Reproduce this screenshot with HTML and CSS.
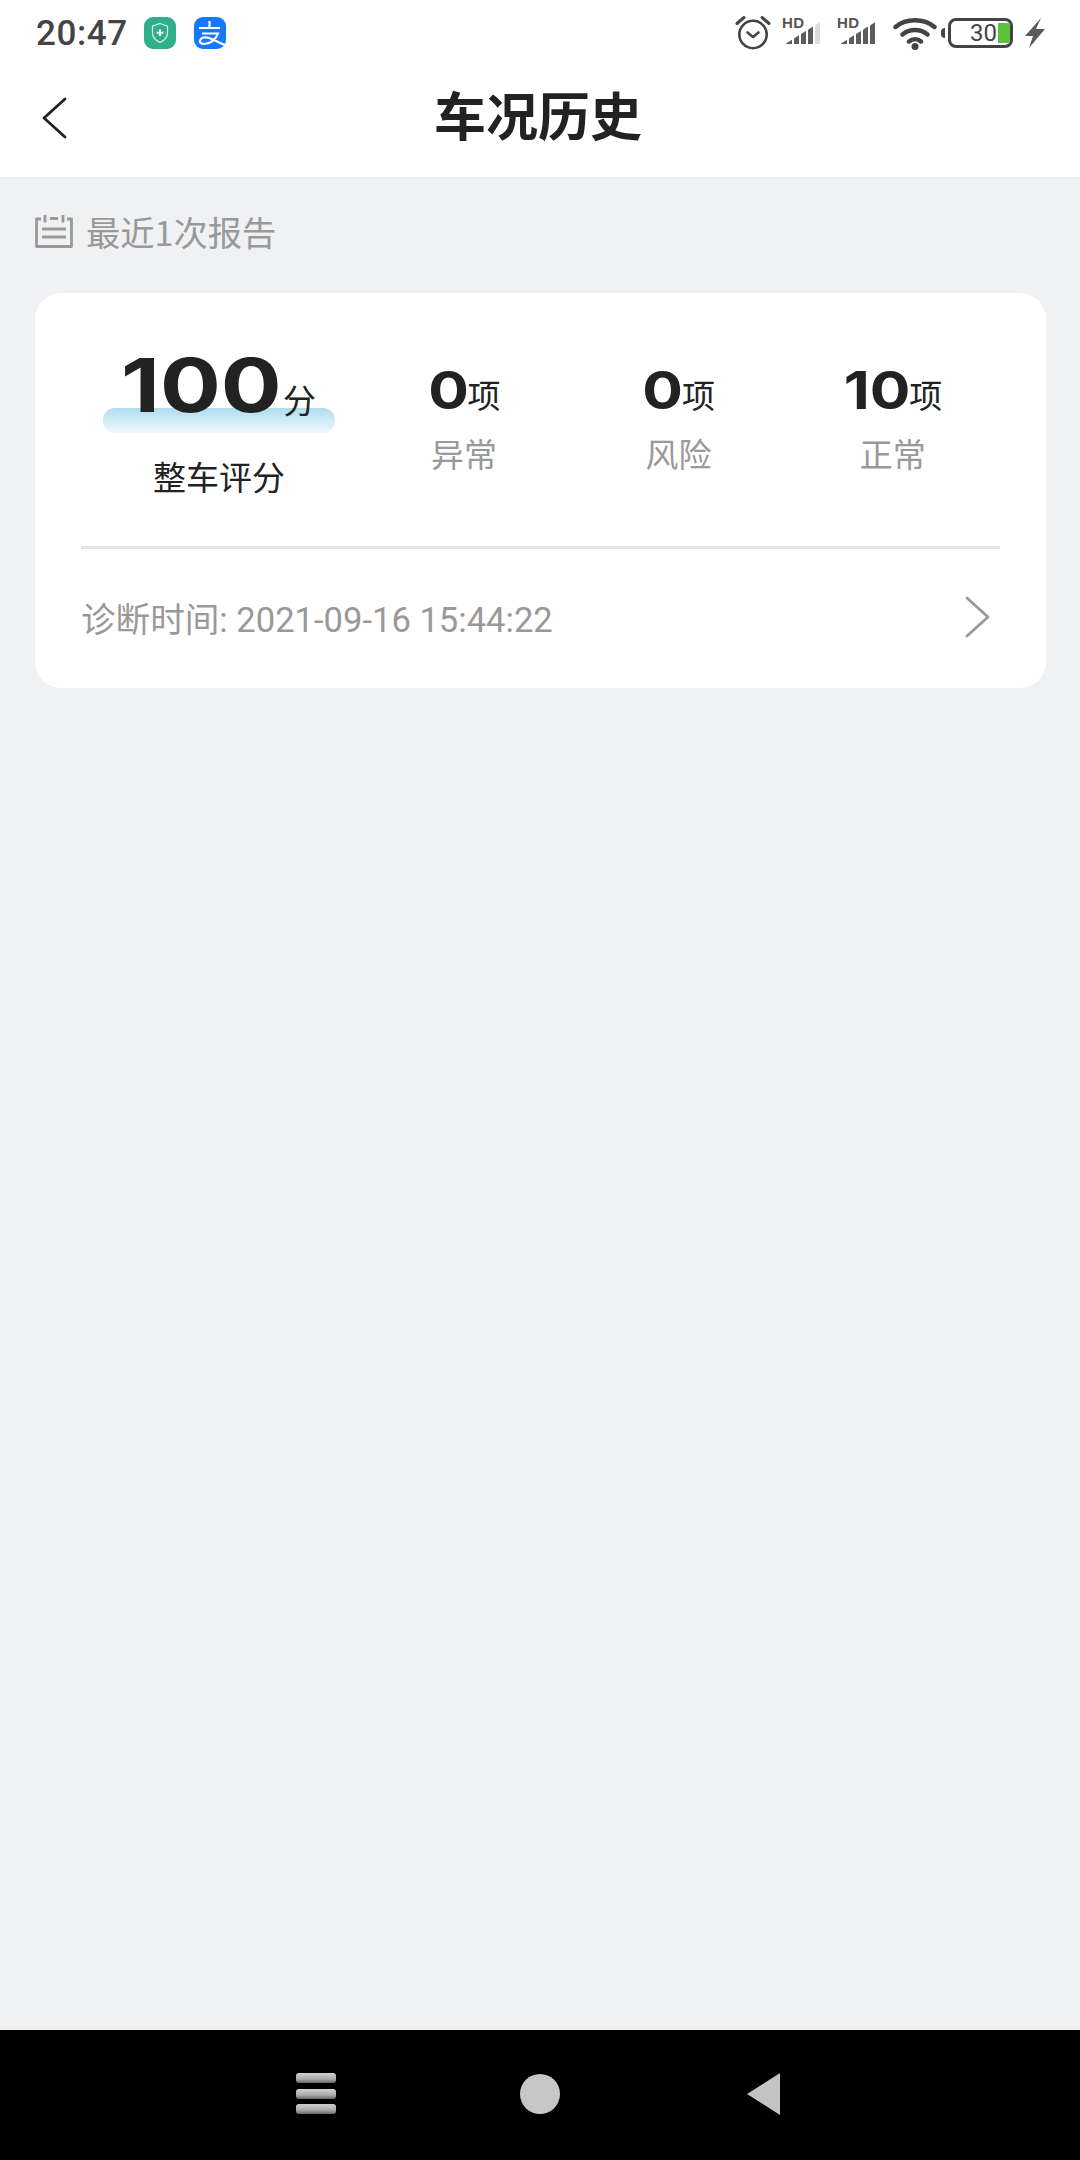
FILE: index.html
```html
<!DOCTYPE html>
<html lang="zh">
<head>
<meta charset="utf-8">
<title>车况历史</title>
<link rel="stylesheet" href="styles.css">
</head>
<body>
<div class="phone">
  <div class="statusbar">
    <div class="status-left">
      <span class="clock">20:47</span>
      <svg class="app-icon" viewBox="0 0 32 32"><rect width="32" height="32" rx="9" fill="#2fae8c"/><path d="M16 6.500l7.500 2.600v6.400c0 4.700-3 8-7.500 10-4.500-2-7.500-5.300-7.500-10V9.100z" fill="none" stroke="#d8f3ea" stroke-width="1.200"/><path d="M16 12.500v6.500M12.700 15.700h6.600" stroke="#fff" stroke-width="2"/></svg>
      <svg class="app-icon alipay" viewBox="0 0 32 32"><rect width="32" height="32" rx="9" fill="#1677ff"/><path d="M15.500 4v8M5 11h21M8 16.500h16c-2 6-8 10.500-14 10.500-3.500 0-4.500-2-4-3.500 1-3 5-4 9-2.500 6 2 10 5 17 7.500" fill="none" stroke="#fff" stroke-width="2.200"/></svg>
    </div>
    <div class="status-right">
      <svg class="alarm" viewBox="0 0 36 36"><circle cx="18" cy="19.500" r="13.700" fill="none" stroke="#444" stroke-width="2.600"/><path d="M12.500 17.500l5.500 4.500 5.500-4.500" fill="none" stroke="#444" stroke-width="2.600" stroke-linecap="round" stroke-linejoin="round"/><path d="M2 8.500L9 2.500M34 8.500L27 2.500" stroke="#444" stroke-width="3" stroke-linecap="round"/></svg>
      <div class="signal">
        <span class="hd">HD</span>
        <svg class="bars" viewBox="0 0 34 22"><path d="M0 22v-.600L6 17.700V22zM8 22v-5.600l5-3.100V22zM15 22V12l5-3v13zM22 22V7.700l5-3.100V22z" fill="#5c5c5c"/><path d="M29 22V3.400l5-3.100V22z" fill="#dcdcdc"/></svg>
      </div>
      <div class="signal second">
        <span class="hd">HD</span>
        <svg class="bars" viewBox="0 0 34 22"><path d="M0 22v-.600L6 17.700V22zM8 22v-5.600l5-3.100V22zM15 22V12l5-3v13zM22 22V7.700l5-3.100V22zM29 22V3.400l5-3.100V22z" fill="#5c5c5c"/></svg>
      </div>
      <svg class="wifi" viewBox="0 0 44 34"><path d="M2.500 11C13 2 31 2 41.500 11M9.500 18.500c7-6 18-6 25 0M16 25.500c3.500-3 8.500-3 12 0" fill="none" stroke="#444" stroke-width="4.400" stroke-linecap="round"/><circle cx="22" cy="30.500" r="3.500" fill="#444"/></svg>
      <div class="battery">
        <span class="bat-nub"></span>
        <div class="bat-body"><span class="bat-num">30</span><span class="bat-fill"></span></div>
      </div>
      <svg class="bolt" viewBox="0 0 20 30"><path d="M16 0L0 18h8L4 30 20 11h-9z" fill="#5a5a5a"/></svg>
    </div>
  </div>
  <header class="navbar">
    <svg class="back" viewBox="0 0 26 42"><path d="M24 2L3 21l21 19" fill="none" stroke="#222" stroke-width="2.800" stroke-linecap="round" stroke-linejoin="round"/></svg>
    <h1 class="title">车况历史</h1>
    <span></span>
  </header>
  <main class="content">
    <div class="section-label">
      <svg class="cal" viewBox="0 0 38 33"><path d="M6 4H1.500v27.500h35V4H32M15 3.500h8" fill="none" stroke="#999" stroke-width="2.800" stroke-linejoin="round"/><path d="M10 0v7.500M28 0v7.500M7 14h24M7 22h24" fill="none" stroke="#999" stroke-width="2.800"/></svg>
      <span>最近1次报告</span>
    </div>
    <section class="card">
      <div class="stats">
        <div class="score">
          <div class="score-value">
            <span class="score-band"></span>
            <span class="digits big">100</span><span class="unit score-unit">分</span>
          </div>
          <div class="score-label">整车评分</div>
        </div>
        <div class="stat"><div class="stat-value"><span class="digits one">0</span><span class="unit">项</span></div><div class="stat-label">异常</div></div>
        <div class="stat"><div class="stat-value"><span class="digits one">0</span><span class="unit">项</span></div><div class="stat-label">风险</div></div>
        <div class="stat"><div class="stat-value"><span class="digits two">10</span><span class="unit">项</span></div><div class="stat-label">正常</div></div>
      </div>
      <div class="diag">
        <span>诊断时间: 2021-09-16 15:44:22</span>
        <svg class="chev" viewBox="0 0 26 42"><path d="M2 2l21 19L2 40" fill="none" stroke="#999" stroke-width="2.800" stroke-linecap="round" stroke-linejoin="round"/></svg>
      </div>
    </section>
  </main>
  <nav class="sysnav">
    <svg class="sys-menu" viewBox="0 0 40 42"><defs><linearGradient id="barg" x1="0" y1="0" x2="0" y2="1"><stop offset="0" stop-color="#d0d0d0"/><stop offset=".6" stop-color="#aaa"/><stop offset="1" stop-color="#666"/></linearGradient></defs><rect y="0" width="40" height="10" rx="3" fill="url(#barg)"/><rect y="16" width="40" height="10" rx="3" fill="url(#barg)"/><rect y="31" width="40" height="10" rx="3" fill="url(#barg)"/></svg>
    <span class="sys-home"></span>
    <svg class="sys-back" viewBox="0 0 34 42"><path d="M33 0v42L0 21z" fill="#c4c4c4"/></svg>
  </nav>
</div>
</body>
</html>
```
FILE: styles.css
```css
* { box-sizing: border-box; margin: 0; padding: 0; }
html, body { width: 1080px; height: 2160px; overflow: hidden; }
body { font-family: "Roboto", "Noto Sans CJK SC", sans-serif; background: #eff1f3; }
.phone { width: 1080px; height: 2160px; display: flex; flex-direction: column; }

.statusbar { height: 64px; flex: none; background: #fff; display: flex; justify-content: space-between; align-items: center; padding: 2px 34px 0 36px; }
.status-left { display: flex; align-items: center; }
.clock { font-family: "Roboto", sans-serif; font-weight: 500; font-size: 35px; letter-spacing: .6px; color: #444; width: 108px; }
.app-icon { width: 32px; height: 32px; display: block; }
.alipay { margin-left: 18px; }
.status-right { display: flex; align-items: center; }
.alarm { width: 36px; height: 36px; display: block; }
.signal { position: relative; width: 38px; height: 26px; margin-left: 11px; margin-top: -4px; }
.signal.second { margin-left: 17px; }
.hd { position: absolute; left: 0; top: -1px; font: 700 15px/12px "Liberation Sans", sans-serif; color: #555; letter-spacing: .3px; }
.bars { position: absolute; left: 4px; top: 4px; width: 34px; height: 22px; display: block; }
.wifi { width: 44px; height: 34px; display: block; margin-left: 18px; }
.battery { display: flex; align-items: center; margin-left: 4px; gap: 3px; }
.bat-nub { width: 4px; height: 10px; background: #444; border-radius: 4px 0 0 4px; }
.bat-body { width: 65px; height: 30px; border: 3px solid #444; border-radius: 8px; display: flex; align-items: center; justify-content: flex-end; padding: 1px 0; }
.bat-num { font: 400 24px/24px "Roboto", sans-serif; color: #444; }
.bat-fill { width: 12px; height: 20px; margin-left: 1px; background: #5cc03a; border-radius: 0 3px 3px 0; }
.bolt { width: 22px; height: 30px; display: block; margin-left: 11px; }

.navbar { height: 113px; flex: none; background: #fff; display: grid; grid-template-columns: 1fr auto 1fr; align-items: center; padding-left: 41px; }
.back { width: 26px; height: 42px; display: block; margin-top: -6px; }
.title { font-size: 52px; font-weight: 700; color: #222; font-family: "Noto Sans CJK SC", sans-serif; line-height: 1; padding: 0 4px 13px 0; margin-left: -41px; }

.content { flex: 1; padding: 0 34px 0 35px; }
.section-label { height: 116px; display: flex; align-items: center; color: #999; font-size: 34.250px; font-family: "Noto Sans CJK SC", sans-serif; gap: 13px; padding-bottom: 9px; }
.cal { width: 38px; height: 33px; display: block; margin-top: 2px; }

.card { background: #fff; border-radius: 26px; height: 395px; padding: 0 46px 0 46px; display: flex; flex-direction: column; }
.stats { height: 256px; flex: none; display: flex; border-bottom: 3px solid #e2e3e5; }
.score { width: 276px; padding-top: 50px; }
.score-value { position: relative; height: 96px; display: flex; justify-content: center; align-items: flex-end; }
.score-band { position: absolute; left: 22px; top: 65px; width: 232px; height: 25px; border-radius: 12px; background: linear-gradient(#aeddee, #f0f9fc); }
.digits { font-family: "Inter", sans-serif; font-weight: 700; color: #222; display: block; transform-origin: left bottom; position: relative; }
.digits.big { width: 160px; font-size: 74px; line-height: 84px; transform: scaleX(1.22); margin: 0 0 12px -3px; }
.unit { color: #222; font-family: "Noto Sans CJK SC", sans-serif; font-size: 33px; line-height: 44px; position: relative; }
.score-unit { margin: 0 -2px 18px 2px; }
.score-label { margin-top: 15px; text-align: center; color: #222; font-size: 33px; line-height: 44px; font-family: "Noto Sans CJK SC", sans-serif; }
.stat { width: 214.500px; text-align: center; padding-top: 71px; }
.stat-value { height: 52px; display: flex; justify-content: center; align-items: flex-end; padding-left: 4px; }
.digits.one, .digits.two { font-size: 52px; line-height: 56px; transform: scaleX(1.16); margin-bottom: -3px; }
.digits.one { width: 46px; margin-left: -10px; }
.digits.two { width: 76px; margin-left: -14px; }
.stat-label { margin-top: 15px; color: #999; font-size: 33px; line-height: 44px; font-family: "Noto Sans CJK SC", sans-serif; }
.diag { flex: 1; display: flex; align-items: center; justify-content: space-between; color: #999; font-size: 34.600px; padding: 0 9px 4px 0; }
.chev { width: 26px; height: 42px; display: block; }

.sysnav { height: 130px; background: #000; flex: none; display: flex; align-items: center; padding: 0 0 2px 296px; }
.sys-menu { width: 40px; height: 42px; display: block; }
.sys-home { width: 40px; height: 40px; border-radius: 50%; background: #c6c6c6; margin-left: 184px; }
.sys-back { width: 34px; height: 42px; display: block; margin-left: 187px; }
```
